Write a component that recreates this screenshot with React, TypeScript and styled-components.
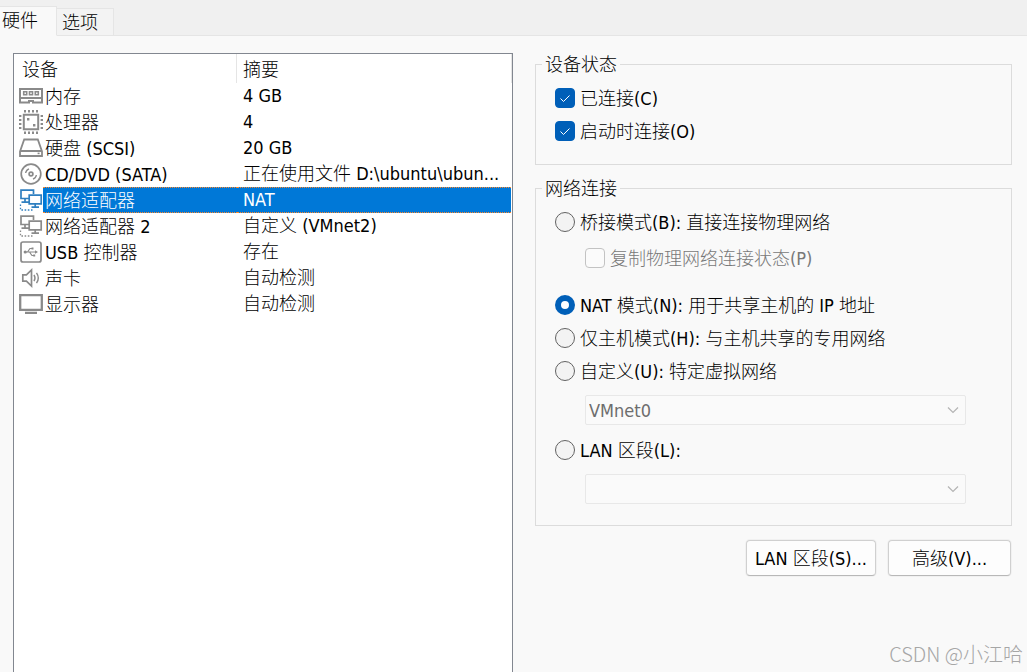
import React from 'react';
import styled, { createGlobalStyle, css } from 'styled-components';

const uiFont = '"DejaVu Sans Condensed", "Noto Sans CJK SC", sans-serif';
const gray = '#8a8a8a';
const blue = '#0078d7';
const accent = '#005fb8';

const GlobalStyle = createGlobalStyle`
  *, *::before, *::after { box-sizing: border-box; }
  body {
    margin: 0;
    background: #f9f9f9;
    color: #000;
    font: 300 18px/24px ${uiFont};
  }
  button, select, input { font: inherit; color: inherit; }
`;

const Window = styled.div`
  position: relative;
  display: flex;
  flex-direction: column;
  min-height: 100vh;
`;

const TabStrip = styled.div`
  display: flex;
  align-items: flex-end;
  height: 36px;
  background: #f0f0f0;
  box-shadow: inset 0 -1px #e5e5e5;
`;

const Tab = styled.button<{ $active?: boolean }>`
  height: ${(p) => (p.$active ? 30 : 28)}px;
  padding: ${(p) => (p.$active ? '0 18px 0 2px' : '1px 15px 0 5px')};
  border: 1px solid #e5e5e5;
  border-left-width: 0;
  border-bottom-color: ${(p) => (p.$active ? '#f9f9f9' : '#e5e5e5')};
  background: ${(p) => (p.$active ? '#f9f9f9' : '#f3f3f3')};
  white-space: nowrap;
`;

const Content = styled.main`
  flex: 1;
  display: grid;
  grid-template-columns: minmax(0, 500fr) minmax(0, 477fr);
  gap: 22px;
  padding: 17px 15px 0 13px;
`;

const DevicePane = styled.section`
  border: 1px solid #828790;
  border-bottom: 0;
  background: #fff;
`;

const DeviceTable = styled.table`
  width: 100%;
  border-spacing: 0;
  table-layout: fixed;
`;

const NameCol = styled.col`
  width: 223px;
`;

const HeadCell = styled.th`
  height: 29px;
  padding: 3px 8px 0;
  border-right: 1px solid #e5e5e5;
  font-weight: inherit;
  text-align: left;

  & + & {
    padding-left: 6px;
  }
`;

const Cell = styled.td`
  padding: 0;
`;

const NameLayout = styled.div`
  display: flex;
  align-items: center;
  padding-left: 5px;
`;

const CellText = styled.span<{ $selected?: boolean }>`
  display: block;
  flex: 1;
  height: 26px;
  border: 1px solid transparent;
  border-width: 1px 0;
  padding: 1px 0 0 2px;
  line-height: 24px;
  overflow: hidden;
  text-overflow: ellipsis;
  white-space: nowrap;
  ${(p) =>
    p.$selected &&
    css`
      border-color: #ff8728;
      border-style: dotted;
      background: ${blue};
      color: #fff;
    `}
`;

const SummaryText = styled(CellText)`
  margin-right: 1px;
  padding: 0 0 0 6px;
`;

const Icon = styled.svg<{ $color?: string }>`
  flex: none;
  width: 24px;
  height: 24px;
  fill: none;
  stroke: ${(p) => p.$color ?? gray};
  stroke-width: 2;
`;

const Settings = styled.section`
  display: flex;
  flex-direction: column;
  gap: 11px;
  margin-top: -1px;
`;

const Group = styled.fieldset`
  display: flex;
  flex-direction: column;
  gap: 9px;
  min-width: 0;
  margin: 0;
  padding: 10px 45px 21px 19px;
  border: 1px solid #dcdcdc;
`;

const Legend = styled.legend`
  margin-left: -13px;
  padding: 2px 3px 0;
  line-height: 22px;
`;

const Choice = styled.label<{ $disabled?: boolean }>`
  display: flex;
  align-items: center;
  gap: 5px;
  white-space: nowrap;
  color: ${(p) => (p.$disabled ? '#787878' : 'inherit')};
`;

const ChoiceText = styled.span`
  padding-top: 2px;
  line-height: 22px;
`;

const Field = styled.div`
  display: flex;
  flex-direction: column;
  gap: 12px;

  & + & {
    margin-top: 4px;
  }
`;

const Indented = styled.div`
  position: relative;
  margin-left: 30px;
`;

const Box = styled.input`
  appearance: none;
  flex: none;
  width: 20px;
  height: 20px;
  margin: 0;
  border: 1px solid #c3c3c3;
  border-radius: 4px;
  background: #fbfbfb;

  &:checked {
    border-color: ${accent};
    background: ${accent};
  }
`;

const BoxWrap = styled.span`
  position: relative;
  display: flex;
`;

const Tick = styled.svg`
  position: absolute;
  inset: 0;
  width: 20px;
  height: 20px;
  fill: none;
  stroke: #fff;
  pointer-events: none;
`;

const Radio = styled.input`
  appearance: none;
  flex: none;
  width: 20px;
  height: 20px;
  margin: 0;
  border: 1px solid #626262;
  border-radius: 50%;
  background: #f3f3f3;

  &:checked {
    border: 6px solid ${accent};
    background: #fff;
  }
`;

const Select = styled.select`
  appearance: none;
  display: block;
  width: 100%;
  height: 30px;
  padding: 1px 30px 0 3px;
  border: 1px solid #e8e8e8;
  border-radius: 2px;
  background: #fafafa;
  color: #6d6d6d;
  opacity: 1;
`;

const Chevron = styled.svg`
  position: absolute;
  top: 9px;
  right: 7px;
  width: 12px;
  height: 12px;
  fill: none;
  stroke: #b4b4b4;
  pointer-events: none;
`;

const SubChoice = styled.div`
  margin: 3px 0 14px 30px;
`;

const Actions = styled.div`
  display: flex;
  justify-content: flex-end;
  gap: 12px;
  padding: 3px 1px 0 0;
`;

const PushButton = styled.button`
  min-width: 123px;
  height: 36px;
  padding: 1px 8px 0;
  border: 1px solid #d0d0d0;
  border-bottom-color: #b8b8b8;
  border-radius: 4px;
  background: #fdfdfd;
  box-shadow: 0 0 0 1px #f1f1f1;
  white-space: nowrap;
`;

const Watermark = styled.div`
  position: absolute;
  right: 4px;
  bottom: 6px;
  color: #a6a6a6;
  font: 300 20px/24px "Noto Sans CJK SC", sans-serif;
`;

const icons: Record<string, React.ReactNode> = {
  memory: (
    <>
      <path d="M1 5h22v9H1zM1 14v4.5h9v-1.5h4v1.5h9V14" />
      <path d="M4.7 7.8h3v3h-3zM10.5 7.8h3v3h-3zM16.3 7.8h3v3h-3z" strokeWidth="1.6" />
    </>
  ),
  cpu: (
    <>
      <path d="M4.8 4.8h14.4v14.4H4.8z" />
      <path d="M5 1.2h14M5 22.8h14M1.2 5v14M22.8 5v14" strokeDasharray="2 2" strokeWidth="2.4" />
      <path d="M8 8h2.4v2.4H8zM14 14h2.4v2.4H14z" fill={gray} stroke="none" />
    </>
  ),
  disk: (
    <>
      <path d="M1 15.5 5.2 3.5h13.6L23 15.5V20H1zM1 15h22" strokeWidth="1.8" />
      <path d="M18.6 17.4h2" strokeWidth="1.6" />
    </>
  ),
  disc: (
    <>
      <circle cx="12" cy="12" r="9.8" strokeWidth="1.7" />
      <circle cx="12" cy="12" r="1.9" strokeWidth="1.7" />
      <path d="M6.6 11a5.5 5.5 0 0 1 3.4-4.2M17.4 13a5.5 5.5 0 0 1-3.4 4.2" strokeWidth="1.4" />
    </>
  ),
  network: (
    <>
      <path d="M10 10.5H2V2.2h12.5V6M6 11v3.2M2.5 14.2h7.5" strokeWidth="1.7" />
      <path d="M10.2 7.2h12v8.6h-12zM16.2 16v3M12.5 19.2h7.5" strokeWidth="1.7" />
      <path d="M1.5 16.5v5.5h12" strokeDasharray="1.6 1.6" strokeWidth="1.3" />
    </>
  ),
  usb: (
    <>
      <rect x="2" y="2" width="20" height="20" rx="2" strokeWidth="1.7" />
      <path d="M6 12h11M8.5 12l2.5-3.5H13M10.5 12l2.5 3.5H15" strokeWidth="1.2" />
      <path d="M19 12 16 10.2v3.6z" fill={gray} stroke="none" />
      <circle cx="6.2" cy="12" r="1.6" fill={gray} stroke="none" />
      <path d="M12.5 7.5h2v2h-2zM14.2 14.5h2v2h-2z" fill={gray} stroke="none" />
    </>
  ),
  sound: (
    <>
      <path d="M3.8 8.8h3.6L12.5 4v16l-5.1-4.8H3.8z" strokeWidth="1.7" />
      <path d="M15 8.8q2 3.2 0 6.4M17.5 6.8q3.6 5.2 0 10.4" strokeWidth="1.4" />
    </>
  ),
  display: <path d="M1.2 3.2h21.6v14.6H1.2zM6 20.8h12" strokeWidth="2.3" />,
};

type Device = { icon: string; name: string; summary: string; selected?: boolean };

const devices: Device[] = [
  { icon: 'memory', name: '内存', summary: '4 GB' },
  { icon: 'cpu', name: '处理器', summary: '4' },
  { icon: 'disk', name: '硬盘 (SCSI)', summary: '20 GB' },
  { icon: 'disc', name: 'CD/DVD (SATA)', summary: '正在使用文件 D:\\ubuntu\\ubun...' },
  { icon: 'network', name: '网络适配器', summary: 'NAT', selected: true },
  { icon: 'network', name: '网络适配器 2', summary: '自定义 (VMnet2)' },
  { icon: 'usb', name: 'USB 控制器', summary: '存在' },
  { icon: 'sound', name: '声卡', summary: '自动检测' },
  { icon: 'display', name: '显示器', summary: '自动检测' },
];

function CheckBox({ label, checked, disabled }: { label: string; checked?: boolean; disabled?: boolean }) {
  return (
    <Choice $disabled={disabled}>
      <BoxWrap>
        <Box type="checkbox" defaultChecked={checked} disabled={disabled} />
        {checked && (
          <Tick viewBox="0 0 20 20" aria-hidden="true">
            <path d="M5.5 10.5 8.5 13.5 14.5 7.5" />
          </Tick>
        )}
      </BoxWrap>
      <ChoiceText>{label}</ChoiceText>
    </Choice>
  );
}

function RadioOption({ label, checked }: { label: string; checked?: boolean }) {
  return (
    <Choice>
      <Radio type="radio" name="connection" defaultChecked={checked} />
      <ChoiceText>{label}</ChoiceText>
    </Choice>
  );
}

function DropDown({ label, value }: { label: string; value: string }) {
  return (
    <Indented>
      <Select aria-label={label} disabled defaultValue={value}>
        <option value={value}>{value}</option>
      </Select>
      <Chevron viewBox="0 0 12 12" aria-hidden="true">
        <path d="M1 3.5 6 8.5 11 3.5" strokeWidth="1.2" />
      </Chevron>
    </Indented>
  );
}

export default function App() {
  return (
    <Window>
      <GlobalStyle />
      <TabStrip role="tablist">
        <Tab role="tab" aria-selected="true" $active>硬件</Tab>
        <Tab role="tab" aria-selected="false">选项</Tab>
      </TabStrip>
      <Content>
        <DevicePane>
          <DeviceTable>
            <colgroup>
              <NameCol />
              <col />
            </colgroup>
            <thead>
              <tr>
                <HeadCell scope="col">设备</HeadCell>
                <HeadCell scope="col">摘要</HeadCell>
              </tr>
            </thead>
            <tbody>
              {devices.map((d) => (
                <tr key={d.name}>
                  <Cell>
                    <NameLayout>
                      <Icon viewBox="0 0 24 24" $color={d.selected ? '#2f7fc0' : gray} aria-hidden="true">
                        {icons[d.icon]}
                      </Icon>
                      <CellText $selected={d.selected}>{d.name}</CellText>
                    </NameLayout>
                  </Cell>
                  <Cell>
                    <SummaryText $selected={d.selected}>{d.summary}</SummaryText>
                  </Cell>
                </tr>
              ))}
            </tbody>
          </DeviceTable>
        </DevicePane>
        <Settings>
          <Group>
            <Legend>设备状态</Legend>
            <CheckBox label="已连接(C)" checked />
            <CheckBox label="启动时连接(O)" checked />
          </Group>
          <Group>
            <Legend>网络连接</Legend>
            <RadioOption label="桥接模式(B): 直接连接物理网络" />
            <SubChoice>
              <CheckBox label="复制物理网络连接状态(P)" disabled />
            </SubChoice>
            <RadioOption label="NAT 模式(N): 用于共享主机的 IP 地址" checked />
            <RadioOption label="仅主机模式(H): 与主机共享的专用网络" />
            <Field>
              <RadioOption label="自定义(U): 特定虚拟网络" />
              <DropDown label="特定虚拟网络" value="VMnet0" />
            </Field>
            <Field>
              <RadioOption label="LAN 区段(L):" />
              <DropDown label="LAN 区段" value="" />
            </Field>
          </Group>
          <Actions>
            <PushButton type="button">LAN 区段(S)...</PushButton>
            <PushButton type="button">高级(V)...</PushButton>
          </Actions>
        </Settings>
      </Content>
      <Watermark>CSDN @小江哈</Watermark>
    </Window>
  );
}
